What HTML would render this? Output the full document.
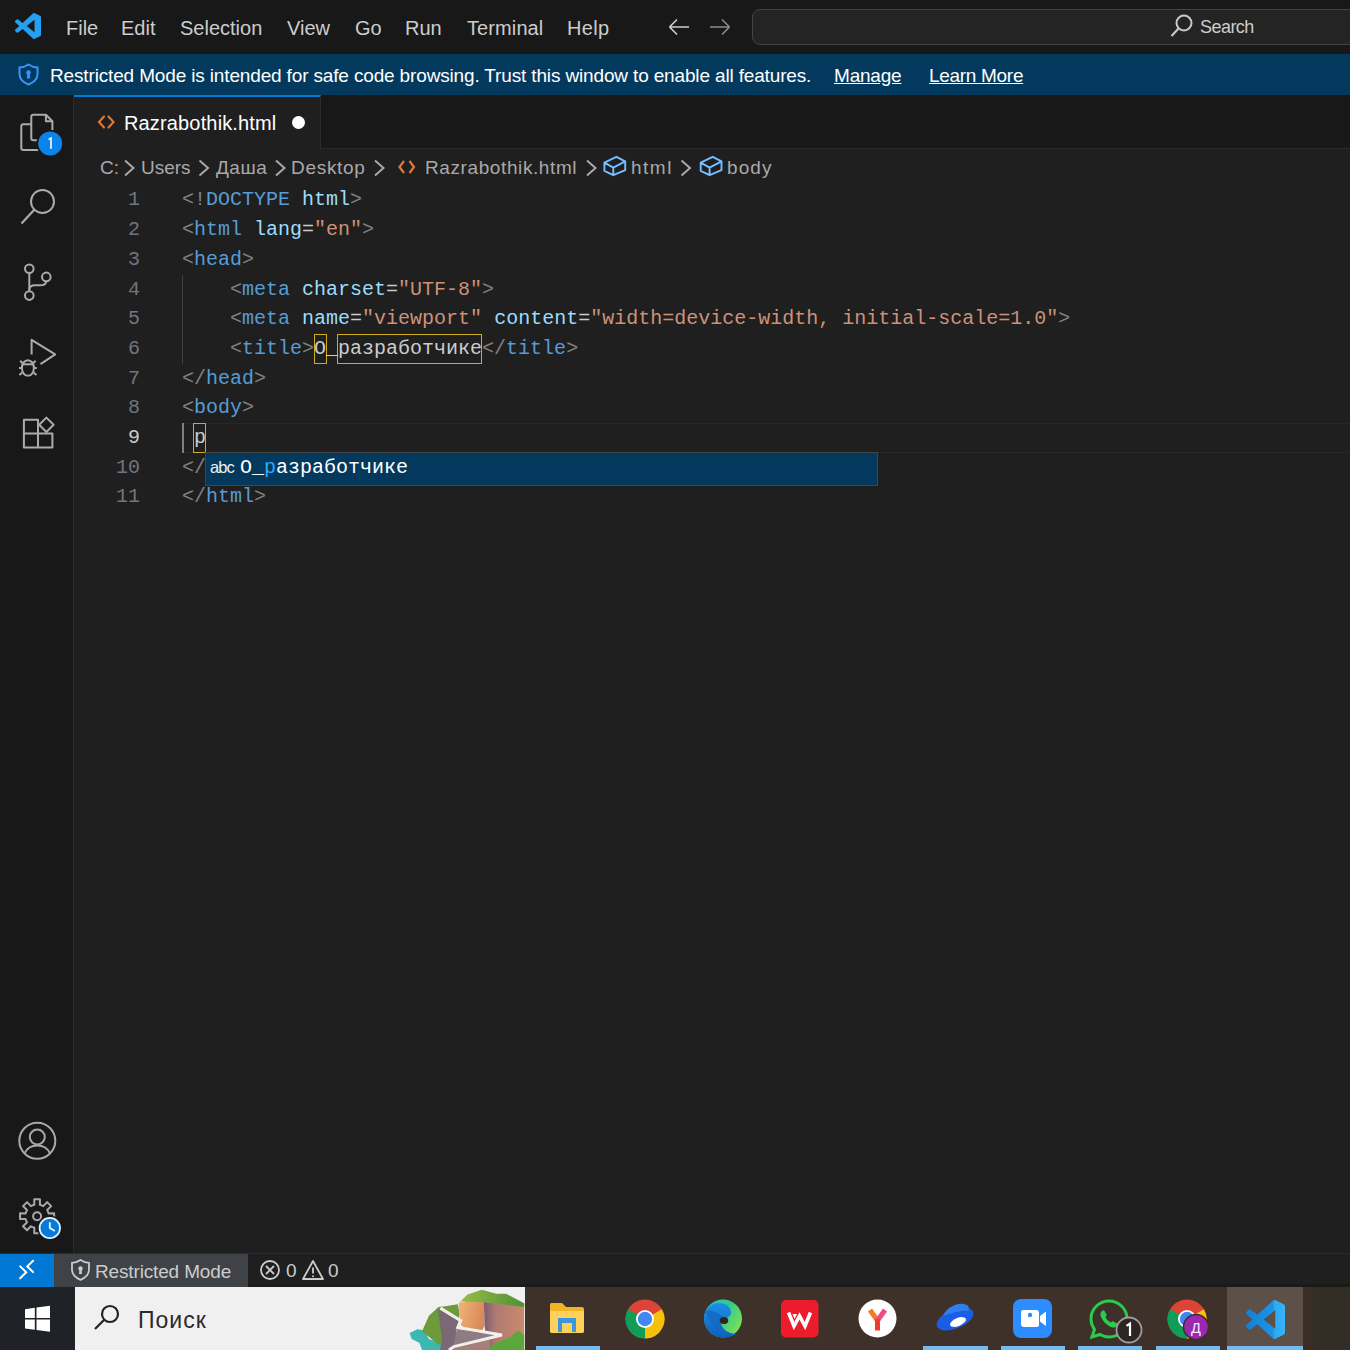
<!DOCTYPE html>
<html><head><meta charset="utf-8">
<style>
*{margin:0;padding:0;box-sizing:border-box}
html,body{width:1350px;height:1350px;overflow:hidden;background:#1f1f1f}
body{position:relative;font-family:"Liberation Sans",sans-serif}
.a{position:absolute}
.t{position:absolute;white-space:pre;line-height:1.117;font-family:"Liberation Sans",sans-serif}
.m{position:absolute;white-space:pre;line-height:1.1325;font-family:"Liberation Mono",monospace}
#title{left:0;top:0;width:1350px;height:54px;background:#181818}
#banner{left:0;top:54px;width:1350px;height:41px;background:#04395e}
#act{left:0;top:95px;width:74px;height:1159px;background:#181818;border-right:1px solid #2b2b2b}
#tabs{left:74px;top:95px;width:1276px;height:54px;background:#181818;border-bottom:1px solid #2b2b2b}
#tab{left:74px;top:95px;width:247px;height:54px;background:#1f1f1f;border-top:2px solid #0078d4;border-right:1px solid #2b2b2b}
#status{left:0;top:1253px;width:1350px;height:34px;background:#1f1f1f;border-top:1.5px solid #2b2b2b;border-bottom:3px solid #1a1a1a}
#taskbar{left:0;top:1287px;width:1350px;height:63px;background:#3d3129}
.menu{color:#cccccc;font-size:20px;top:17px}
.code{font-size:20px;color:#cccccc}
.ln{position:absolute;font-family:"Liberation Mono",monospace;font-size:20px;color:#6e7681;text-align:right;width:60px;left:80px;line-height:1.1325;white-space:pre}
.tg{color:#808080}.tn{color:#569cd6}.at{color:#9cdcfe}.st{color:#ce9178}
.bc{color:#a9a9a9;font-size:19px;top:157px}
.chev{position:absolute;top:162px}
</style></head>
<body>
<!-- title bar -->
<div id="title" class="a"></div>
<svg class="a" style="left:15px;top:13px" width="26" height="26" viewBox="0 0 100 100"><path fill="#23a0f0" d="M96.46 10.8L75.86.87a6.23 6.23 0 0 0-7.1 1.2L29.35 38.04 12.19 25.01a4.16 4.16 0 0 0-5.32.24L1.36 30.26a4.17 4.17 0 0 0 0 6.16L16.25 50 1.36 63.58a4.17 4.17 0 0 0 0 6.16l5.51 5.01a4.16 4.16 0 0 0 5.32.24l17.16-13.03 39.41 35.96a6.22 6.22 0 0 0 7.1 1.2l20.6-9.92a6.24 6.24 0 0 0 3.540-5.63V16.43a6.25 6.25 0 0 0-3.54-5.63zm-21.45 63.55L45.11 50l29.9-24.35z"/></svg>
<div class="t menu" style="left:66px">File</div>
<div class="t menu" style="left:121px">Edit</div>
<div class="t menu" style="left:180px">Selection</div>
<div class="t menu" style="left:287px">View</div>
<div class="t menu" style="left:355px">Go</div>
<div class="t menu" style="left:405px">Run</div>
<div class="t menu" style="left:467px;letter-spacing:0.1px">Terminal</div>
<div class="t menu" style="left:567px;letter-spacing:0.3px">Help</div>
<svg class="a" style="left:666px;top:16px" width="70" height="22" viewBox="0 0 70 22">
 <path d="M3.5 11H23M3.5 11L11 3.5M3.5 11L11 18.5" stroke="#cccccc" stroke-width="1.7" fill="none"/>
 <path d="M44 11H63.5M63.5 11L56 3.5M63.5 11L56 18.5" stroke="#8a8a8a" stroke-width="1.7" fill="none"/>
</svg>
<div class="a" style="left:752px;top:9px;width:640px;height:36px;border:1.8px solid #444444;border-radius:8px;background:#242424"></div>
<svg class="a" style="left:1169px;top:13px" width="26" height="26" viewBox="0 0 26 26"><circle cx="15" cy="10" r="7.5" stroke="#c8c8c8" stroke-width="2" fill="none"/><path d="M9.5 15.5L2.5 23" stroke="#c8c8c8" stroke-width="2.2"/></svg>
<div class="t" style="left:1200px;top:17px;font-size:18px;color:#cccccc;letter-spacing:-0.55px">Search</div>

<!-- banner -->
<div id="banner" class="a"></div>
<svg class="a" style="left:17px;top:63px" width="23" height="23" viewBox="0 0 23 23"><path d="M11.5 1.5C8.5 3.5 5 4.5 2.5 4.5V11C2.5 16 6.5 19.5 11.5 21.5C16.5 19.5 20.5 16 20.5 11V4.5C18 4.5 14.5 3.5 11.5 1.5Z" stroke="#3794ff" stroke-width="2" fill="none"/><circle cx="11.5" cy="9.5" r="2.3" fill="#3794ff"/><path d="M10.3 10.5h2.4l0.5 5h-3.4z" fill="#3794ff"/></svg>
<div class="t" style="left:50px;top:65px;font-size:19px;color:#ffffff;letter-spacing:-0.15px">Restricted Mode is intended for safe code browsing. Trust this window to enable all features.</div>
<div class="t" style="left:834px;top:65px;font-size:19px;color:#ffffff;text-decoration:underline;letter-spacing:-0.2px">Manage</div>
<div class="t" style="left:929px;top:65px;font-size:19px;color:#ffffff;text-decoration:underline;letter-spacing:-0.3px">Learn More</div>

<!-- activity bar -->
<div id="act" class="a"></div>
<!-- activity icons -->
<svg class="a" style="left:0;top:95px" width="74" height="380" viewBox="0 95 74 380" fill="none" stroke="#ababab" stroke-width="2" stroke-linejoin="round">
 <!-- explorer -->
 <path d="M40 140.2H33.3Q31.3 140.2 31.3 138.2V116.7Q31.3 114.7 33.3 114.7H45.9L52.4 121.2V133"/>
 <path d="M45.9 114.9V121.2H52.2"/>
 <path d="M31.3 124.3H23.3Q21.3 124.3 21.3 126.3V147.9Q21.3 149.9 23.3 149.9H40"/>
 <!-- search -->
 <circle cx="42.5" cy="201.5" r="11.5"/>
 <path d="M34.5 209.5L21.5 223.5" stroke-width="2.2"/>
 <!-- scm -->
 <circle cx="29.3" cy="268.7" r="4.3"/>
 <circle cx="29.3" cy="295.6" r="4.3"/>
 <circle cx="46.3" cy="276.9" r="4.3"/>
 <path d="M29.3 273V291.3"/>
 <path d="M46.3 281.2C46.3 284 44 285.3 40 285.3H35C31.5 285.3 29.3 287 29.3 290"/>
 <!-- run debug -->
 <path d="M31.6 354.5V339.8L55.2 354.4L40.5 364.2"/>
 <ellipse cx="27.9" cy="368" rx="6" ry="7.8"/>
 <path d="M22.5 364.3H33.3"/>
 <path d="M20.2 360.8L22.6 363.2M19 368H21.8M19.4 375L22.2 372.4M35.6 360.8L33.2 363.2M36.8 368H34M36.4 375L33.6 372.4"/>
 <!-- extensions -->
 <path d="M23.9 419.8H38V447.6H23.9Z M23.9 433.5H52.4V447.6H38"/>
 <path d="M46.4 417.6L53.6 424.8L46.4 432L39.2 424.8Z"/>
</svg>
<svg class="a" style="left:0;top:1110px" width="74" height="140" viewBox="0 1110 74 140" fill="none" stroke="#a9a9a9" stroke-width="2">
 <circle cx="37.3" cy="1140.8" r="18"/>
 <circle cx="37.3" cy="1137" r="7.5"/>
 <path d="M24.5 1153.5C27 1148 32 1145.5 37.3 1145.5C42.6 1145.5 47.6 1148 50.1 1153.5"/>
 <path stroke-linejoin="round" d="M41.04 1205.08 L39.85 1204.73 L39.96 1199.14 L34.24 1199.14 L34.35 1204.73 L33.16 1205.08 L32.02 1205.55 L30.93 1206.14 L27.05 1202.12 L23.02 1206.15 L27.04 1210.03 L26.45 1211.12 L25.98 1212.26 L25.63 1213.45 L20.04 1213.34 L20.04 1219.06 L25.63 1218.95 L25.98 1220.14 L26.45 1221.28 L27.04 1222.37 L23.02 1226.25 L27.05 1230.28 L30.93 1226.26 L32.02 1226.85 L33.16 1227.32 L34.35 1227.67 L34.24 1233.26 L39.96 1233.26 L39.85 1227.67 L41.04 1227.32 L42.18 1226.85 L43.27 1226.26 L47.15 1230.28 L51.18 1226.25 L47.16 1222.37 L47.75 1221.28 L48.22 1220.14 L48.57 1218.95 L54.16 1219.06 L54.16 1213.34 L48.57 1213.45 L48.22 1212.26 L47.75 1211.12 L47.16 1210.03 L51.18 1206.15 L47.15 1202.12 L43.27 1206.14 L42.18 1205.55Z"/>
 <circle cx="37.1" cy="1216.2" r="4"/>
 <circle cx="49.8" cy="1228" r="12.5" fill="#181818" stroke="none"/>
 <circle cx="49.8" cy="1228" r="10.2" fill="#0a78d8" stroke="#d8f4ff" stroke-width="1.8"/>
 <path d="M49.8 1222.2v5.8l5 3" stroke="#e8f8ff" stroke-width="1.8"/>
</svg>
<svg class="a" style="left:36px;top:130px" width="30" height="30" viewBox="0 0 30 30"><circle cx="14.2" cy="13.6" r="13.8" fill="#181818"/><circle cx="14.2" cy="13.6" r="12" fill="#0a84ea"/><path d="M12.6 9.6L15 8.3V18.8" stroke="#eef6ff" stroke-width="1.7" fill="none"/></svg>


<!-- tabs -->
<div id="tabs" class="a"></div>
<div id="tab" class="a"></div>
<svg class="a" style="left:90px;top:110px" width="30" height="24" viewBox="90 110 30 24" fill="none" stroke="#e37933" stroke-width="2.1" stroke-linecap="round"><path d="M104 116.5L99 122L104 127.5M108.5 116.5L113.5 122L108.5 127.5"/></svg>
<div class="t" style="left:124px;top:112px;font-size:20px;color:#ffffff;letter-spacing:0.15px">Razrabothik.html</div>
<div class="a" style="left:292px;top:116px;width:13px;height:13px;border-radius:50%;background:#ffffff"></div>
<!-- breadcrumbs -->
<div class="t bc" style="left:100px">C:</div>
<div class="t bc" style="left:141px">Users</div>
<div class="t bc" style="left:216px;letter-spacing:0.5px">Даша</div>
<div class="t bc" style="left:291px;letter-spacing:0.7px">Desktop</div>
<div class="t bc" style="left:425px;letter-spacing:0.6px">Razrabothik.html</div>
<div class="t bc" style="left:631px;letter-spacing:1.5px">html</div>
<div class="t bc" style="left:727px;letter-spacing:1.1px">body</div>
<svg class="a" style="left:0;top:150px" width="780" height="35" viewBox="0 150 780 35" fill="none">
 <g stroke="#a9a9a9" stroke-width="2"><path d="M125 160.5L133.5 168L125 175.5"/><path d="M199.5 160.5L208 168L199.5 175.5"/><path d="M276 160.5L284.5 168L276 175.5"/><path d="M375 160.5L383.5 168L375 175.5"/><path d="M587 160.5L595.5 168L587 175.5"/><path d="M681.5 160.5L690 168L681.5 175.5"/></g>
 <path d="M404 161L399.5 167L404 173M409.5 161L414 167L409.5 173" stroke="#e37933" stroke-width="2.2"/>
 <g stroke="#75beff" stroke-width="1.9" stroke-linejoin="round"><path d="M616.4 156.8L625.2 161.3V170.2L613.3 175.2L604.4 170.8V162.6Z M604.4 162.6L613.3 167.6L625.2 161.3 M613.3 167.6V175.2"/>
 <path transform="translate(96.3 0)" d="M616.4 156.8L625.2 161.3V170.2L613.3 175.2L604.4 170.8V162.6Z M604.4 162.6L613.3 167.6L625.2 161.3 M613.3 167.6V175.2"/></g>
</svg>



<!-- editor -->
<div class="a" style="left:182px;top:422.50px;width:1168px;height:30.20px;border-top:1.5px solid #282828;border-bottom:1.5px solid #282828"></div>
<div class="a" style="left:182px;top:274.50px;width:1px;height:89.10px;background:#404040"></div>
<div class="a" style="left:181.5px;top:423.00px;width:2px;height:29.70px;background:#808080"></div>
<div class="a" style="left:314px;top:333.90px;width:13px;height:29.70px;border:1.3px solid #cdae1a"></div>
<div class="a" style="left:337px;top:333.90px;width:145px;height:29.70px;border:1.3px solid #cdae1a"></div>
<div class="a" style="left:193px;top:423.00px;width:13px;height:29.70px;border:1.3px solid #cdae1a"></div>
<div class="ln" style="top:185.40px;height:29.7px;line-height:29.7px;color:#6e7681">1</div>
<div class="m code" style="left:182px;top:185.40px;height:29.7px;line-height:29.7px"><span class="tg">&lt;!</span><span class="tn">DOCTYPE</span> <span class="at">html</span><span class="tg">&gt;</span></div>
<div class="ln" style="top:215.10px;height:29.7px;line-height:29.7px;color:#6e7681">2</div>
<div class="m code" style="left:182px;top:215.10px;height:29.7px;line-height:29.7px"><span class="tg">&lt;</span><span class="tn">html</span> <span class="at">lang</span>=<span class="st">"en"</span><span class="tg">&gt;</span></div>
<div class="ln" style="top:244.80px;height:29.7px;line-height:29.7px;color:#6e7681">3</div>
<div class="m code" style="left:182px;top:244.80px;height:29.7px;line-height:29.7px"><span class="tg">&lt;</span><span class="tn">head</span><span class="tg">&gt;</span></div>
<div class="ln" style="top:274.50px;height:29.7px;line-height:29.7px;color:#6e7681">4</div>
<div class="m code" style="left:182px;top:274.50px;height:29.7px;line-height:29.7px">    <span class="tg">&lt;</span><span class="tn">meta</span> <span class="at">charset</span>=<span class="st">"UTF-8"</span><span class="tg">&gt;</span></div>
<div class="ln" style="top:304.20px;height:29.7px;line-height:29.7px;color:#6e7681">5</div>
<div class="m code" style="left:182px;top:304.20px;height:29.7px;line-height:29.7px">    <span class="tg">&lt;</span><span class="tn">meta</span> <span class="at">name</span>=<span class="st">"viewport"</span> <span class="at">content</span>=<span class="st">"width=device-width, initial-scale=1.0"</span><span class="tg">&gt;</span></div>
<div class="ln" style="top:333.90px;height:29.7px;line-height:29.7px;color:#6e7681">6</div>
<div class="m code" style="left:182px;top:333.90px;height:29.7px;line-height:29.7px">    <span class="tg">&lt;</span><span class="tn">title</span><span class="tg">&gt;</span>O_разработчике<span class="tg">&lt;/</span><span class="tn">title</span><span class="tg">&gt;</span></div>
<div class="ln" style="top:363.60px;height:29.7px;line-height:29.7px;color:#6e7681">7</div>
<div class="m code" style="left:182px;top:363.60px;height:29.7px;line-height:29.7px"><span class="tg">&lt;/</span><span class="tn">head</span><span class="tg">&gt;</span></div>
<div class="ln" style="top:393.30px;height:29.7px;line-height:29.7px;color:#6e7681">8</div>
<div class="m code" style="left:182px;top:393.30px;height:29.7px;line-height:29.7px"><span class="tg">&lt;</span><span class="tn">body</span><span class="tg">&gt;</span></div>
<div class="ln" style="top:423.00px;height:29.7px;line-height:29.7px;color:#cccccc">9</div>
<div class="m code" style="left:182px;top:423.00px;height:29.7px;line-height:29.7px"> p</div>
<div class="ln" style="top:452.70px;height:29.7px;line-height:29.7px;color:#6e7681">10</div>
<div class="m code" style="left:182px;top:452.70px;height:29.7px;line-height:29.7px"><span class="tg">&lt;/</span><span class="tn">body</span><span class="tg">&gt;</span></div>
<div class="ln" style="top:482.40px;height:29.7px;line-height:29.7px;color:#6e7681">11</div>
<div class="m code" style="left:182px;top:482.40px;height:29.7px;line-height:29.7px"><span class="tg">&lt;/</span><span class="tn">html</span><span class="tg">&gt;</span></div>
<div class="a" style="left:205px;top:452.20px;width:673px;height:34px;background:#04395e;border:1px solid #454545"></div>
<div class="t" style="left:210px;top:458.20px;font-size:16.5px;color:#f0f0f0;letter-spacing:-0.9px">abc</div>
<div class="m" style="left:240px;top:452.20px;font-size:20px;line-height:31px;color:#ffffff">O_<span style="color:#2aaaff">р</span>азработчике</div>
<!-- status bar -->
<div id="status" class="a"></div>
<div class="a" style="left:0;top:1254px;width:54px;height:33px;background:#0078d4"></div>
<svg class="a" style="left:0;top:1254px" width="54" height="33" viewBox="0 1254 54 33" fill="none" stroke="#ffffff" stroke-width="2" stroke-linecap="round"><path d="M20.2 1266.4L26.2 1272.2L20.2 1278.2M33.1 1260.8L27.3 1266.4L33.1 1272.1"/></svg>
<div class="a" style="left:54px;top:1254px;width:194px;height:33px;background:#3f4246"></div>
<svg class="a" style="left:69px;top:1258px" width="23" height="24" viewBox="0 0 23 24" fill="none"><path d="M11.5 2C8.8 3.8 5.5 4.8 3 4.8V11.5C3 16.5 6.5 19.8 11.5 21.8C16.5 19.8 20 16.5 20 11.5V4.8C17.5 4.8 14.2 3.8 11.5 2Z" stroke="#cccccc" stroke-width="1.8"/><circle cx="11.5" cy="10.5" r="2.2" fill="#cccccc"/><path d="M10.4 11.5h2.2l0.4 4.5h-3z" fill="#cccccc"/></svg>
<div class="t" style="left:95px;top:1260.7px;font-size:19px;color:#cccccc;letter-spacing:-0.15px">Restricted Mode</div>
<svg class="a" style="left:258px;top:1258px" width="90" height="24" viewBox="0 0 90 24" fill="none" stroke="#cccccc" stroke-width="1.8"><circle cx="12" cy="12" r="9"/><path d="M8 8L16 16M16 8L8 16"/><path d="M55 3L65 21H45Z" stroke-linejoin="round"/><path d="M55 9.5V15.5M55 17.5V19" /></svg>
<div class="t" style="left:286px;top:1260px;font-size:19px;color:#cccccc">0</div>
<div class="t" style="left:328px;top:1260px;font-size:19px;color:#cccccc">0</div>

<div id="taskbar" class="a"></div>
<div class="a" style="left:0;top:1287px;width:75px;height:63px;background:#1f2226"></div>
<svg class="a" style="left:24px;top:1305px" width="28" height="28" viewBox="0 0 28 28" fill="#ffffff"><path d="M1 4.2L10.8 2.8V13H1Z"/><path d="M12.5 2.6L26 0.8V13H12.5Z"/><path d="M1 14.6H10.8V24.8L1 23.4Z"/><path d="M12.5 14.6H26V26.8L12.5 25Z"/></svg>
<div class="a" style="left:75px;top:1287px;width:450px;height:63px;background:#f0f0f0"></div>
<svg class="a" style="left:90px;top:1302px" width="32" height="32" viewBox="0 0 32 32" fill="none" stroke="#222222" stroke-width="2.2"><circle cx="20" cy="12" r="8"/><path d="M14.2 17.8L5 27"/></svg>
<div class="t" style="left:138px;top:1307.5px;font-size:23px;color:#2a2a2a;letter-spacing:1px">Поиск</div>
<!-- illustration -->
<svg class="a" style="left:400px;top:1285px" width="125" height="65" viewBox="0 0 125 65">
 <defs>
  <linearGradient id="rk" x1="0" y1="0" x2="1" y2="0.3"><stop offset="0" stop-color="#f2b57a"/><stop offset="1" stop-color="#d88b5a"/></linearGradient>
  <linearGradient id="rk2" x1="0" y1="0" x2="1" y2="0"><stop offset="0" stop-color="#7d5a6e"/><stop offset="0.3" stop-color="#b07a72"/><stop offset="1" stop-color="#c98a6c"/></linearGradient>
  <linearGradient id="gr" x1="0" y1="0" x2="1" y2="0"><stop offset="0" stop-color="#9bbf45"/><stop offset="1" stop-color="#4f8f3a"/></linearGradient>
 </defs>
 <path d="M9.6 48.1L17.3 44.3L24.1 45.3L28.9 53.9L40.4 57.8L48.1 59.7L48.1 65L22.1 65L19.3 57.8L11.6 53.9Z" fill="#3cb8b0"/>
 <path d="M22.1 46.2L28.9 30.8L38.5 22.1L45.3 21.2L57.8 19.3L59.7 28.9L53.9 57.8L38.5 59.7Z" fill="#6d9a3a"/>
 <path d="M58.7 18.3L77 13.5L83.8 16.4L84.7 40.4L81.8 46.2L67.4 46.2L59.7 38.5Z" fill="url(#rk)"/>
 <path d="M83.8 16.4L124.2 19.3L124.2 65L86.7 65L84.7 40.4Z" fill="url(#rk2)"/>
 <path d="M57.8 19.3L67.4 9.6L81.8 4.8L96.3 8.7L105.9 8.7L124.2 18.3L124.2 22.1L83.8 17.3L61.6 16.4Z" fill="url(#gr)"/>
 <path d="M50 60L90 48L90 65L48 65Z" fill="#a58078"/>
 <path d="M38 24L59 35L56 45L60 60L48 65H40L42 55Z" fill="#7b6874"/>
 <path d="M57 44L102 50L62 62L52 65H50L54 58Z" fill="#8d7c82"/>
 <path d="M40.4 23.1L60.7 35.6L57.8 42.4L102 50L54 61.6L49 65" fill="none" stroke="#f3efea" stroke-width="3" stroke-linejoin="miter"/>
 <path d="M86.7 65L96.3 57.8L110.7 52L117.5 45.3L124.2 50.1L124.2 65Z" fill="#5aa83c"/>
</svg>
<!-- taskbar icons -->
<svg class="a" style="left:548px;top:1301px" width="38" height="34" viewBox="0 0 38 34">
 <path d="M2 4C2 2.5 3 2 4 2H14L18 6H34C35 6 36 7 36 8V30C36 31 35 32 34 32H4C3 32 2 31 2 30Z" fill="#f2b427"/>
 <path d="M2 10H36V30C36 31 35 32 34 32H4C3 32 2 31 2 30Z" fill="#ffd05a"/>
 <path d="M10 17H28V31H24V22H14V31H10Z" fill="#3a96dd"/>
</svg>
<div class="a" style="left:536px;top:1346px;width:64px;height:4px;background:#76b9ed"></div>
<svg class="a" style="left:625px;top:1299px" width="40" height="40" viewBox="0 0 40 40">
 <circle cx="20" cy="20" r="19.5" fill="#db4437"/>
 <path d="M20 20L36.9 10.25A19.5 19.5 0 0 1 20 39.5Z" fill="#f4c20d"/>
 <path d="M20 20L20 39.5A19.5 19.5 0 0 1 3.1 10.25Z" fill="#0f9d58"/>
 <circle cx="20" cy="20" r="9" fill="#ffffff"/>
 <circle cx="20" cy="20" r="7.2" fill="#4285f4"/>
</svg>
<svg class="a" style="left:703px;top:1299px" width="40" height="40" viewBox="0 0 40 40">
 <defs><linearGradient id="eg" x1="0" y1="0" x2="1" y2="0.6"><stop offset="0" stop-color="#2fb8e8"/><stop offset="0.55" stop-color="#34c98a"/><stop offset="1" stop-color="#78e05a"/></linearGradient>
 <linearGradient id="eb" x1="0" y1="0" x2="0" y2="1"><stop offset="0" stop-color="#1d8fe6"/><stop offset="1" stop-color="#0f5fb8"/></linearGradient></defs>
 <circle cx="20" cy="19.5" r="19" fill="url(#eg)"/>
 <path d="M1 19.5C1 10 8 4 16 4C23 4 28 8 28 13C28 17 25 19 21 19.5C19 19.8 18 21 18 23C18 29 24 35 33 35C29.5 37.5 25 38.5 20 38.5C9.5 38.5 1 30 1 19.5Z" fill="url(#eb)"/>
 <path d="M3 12C5 21 11 31 22 36C26 37.5 30 37 33 35C26 35 18 30 17 23C16.5 20 18 18.5 21 18.5C16 14 8 10 3 12Z" fill="#1468c6" opacity="0.8"/>
 <ellipse cx="21" cy="21.5" rx="4.2" ry="3.6" fill="#2e2420"/>
</svg>
<svg class="a" style="left:780px;top:1300px" width="39" height="38" viewBox="0 0 39 38">
 <rect x="1" y="0" width="37.5" height="37.5" rx="5" fill="#ec1c2c"/>
 <path d="M8.5 12.5L14 26L19.5 16L25 26L30.5 12.5" fill="none" stroke="#ffffff" stroke-width="3.6" stroke-linejoin="miter"/>
 <path d="M12.5 14H17L14.5 19Z" fill="#ffffff"/>
</svg>
<svg class="a" style="left:858px;top:1299px" width="39" height="39" viewBox="0 0 39 39">
 <circle cx="19.5" cy="19.5" r="19" fill="#ffffff"/>
 <path d="M19.5 21.5L12 11" stroke="#f47a26" stroke-width="5"/>
 <path d="M19.5 21.5L27 11" stroke="#ee4a8a" stroke-width="5"/>
 <path d="M19.5 20V31.5" stroke="#f03c2a" stroke-width="5"/>
</svg>
<svg class="a" style="left:934px;top:1302px" width="42" height="33" viewBox="0 0 42 33">
 <ellipse cx="21" cy="17" rx="19.5" ry="9.5" transform="rotate(-22 21 17)" fill="#1a5ee6"/>
 <path d="M9 14C12 6 22 1 30 2C35 3 36 6 34 9C28 8 18 11 9 14Z" fill="#2f7ef0"/>
 <ellipse cx="24" cy="20" rx="8.5" ry="4" transform="rotate(-22 24 20)" fill="#ffffff"/>
</svg>
<div class="a" style="left:923px;top:1346px;width:65px;height:4px;background:#76b9ed"></div>
<svg class="a" style="left:1013px;top:1299px" width="39" height="39" viewBox="0 0 39 39">
 <rect x="0" y="0" width="39" height="39" rx="8" fill="#2d8cff"/>
 <path d="M8 13C8 12 9 11 10 11H23C25 11 26 12 26 14V26C26 27 25 28 24 28H11C9 28 8 27 8 25Z" fill="#ffffff"/>
 <path d="M27 17L33 12.5V27L27 22.5Z" fill="#ffffff"/>
 <circle cx="17" cy="16" r="2.2" fill="#2d8cff"/>
</svg>
<div class="a" style="left:1001px;top:1346px;width:64px;height:4px;background:#76b9ed"></div>
<svg class="a" style="left:1089px;top:1299px" width="56" height="46" viewBox="0 0 56 46">
 <path d="M20 2C30 2 38 10 38 20C38 30 30 38 20 38C16.5 38 13.5 37 11 35.5L3 38L5.5 30.5C3.5 27.5 2 24 2 20C2 10 10 2 20 2Z" fill="none" stroke="#28cd4c" stroke-width="3"/>
 <path d="M13 12C14 11 15 11 15.5 12L17.5 15.5C18 16.5 17.5 17 16.5 18C17.5 20.5 19.5 22.5 22 23.5C23 22.5 23.5 22 24.5 22.5L28 24.5C29 25 29 26 28 27C26 29 23.5 29 20 27C16.5 25 14 22 12.5 19C11 16 11 14 13 12Z" fill="#28cd4c"/>
 <circle cx="40" cy="31" r="12.5" fill="#2b2623" stroke="#a39d98" stroke-width="1.8"/>
 <path d="M37.5 26.8L41 24.5V37" stroke="#ffffff" stroke-width="2.2" fill="none"/>
</svg>
<div class="a" style="left:1078px;top:1346px;width:64px;height:4px;background:#76b9ed"></div>
<svg class="a" style="left:1167px;top:1299px" width="44" height="44" viewBox="0 0 44 44">
 <circle cx="20" cy="20" r="19.5" fill="#db4437"/>
 <path d="M20 20L36.9 10.25A19.5 19.5 0 0 1 20 39.5Z" fill="#f4c20d"/>
 <path d="M20 20L20 39.5A19.5 19.5 0 0 1 3.1 10.25Z" fill="#0f9d58"/>
 <circle cx="20" cy="20" r="9" fill="#ffffff"/>
 <circle cx="20" cy="20" r="7.2" fill="#4285f4"/>
 <circle cx="29" cy="28" r="12.5" fill="#9c27b0" stroke="#3a2e28" stroke-width="1.5"/>
 <text x="29" y="33.5" font-family="Liberation Sans" font-size="14.5" fill="#f4e8ff" text-anchor="middle">Д</text>
</svg>
<div class="a" style="left:1156px;top:1346px;width:64px;height:4px;background:#76b9ed"></div>
<div class="a" style="left:1303px;top:1287px;width:47px;height:63px;background:linear-gradient(90deg,#3a2d24 0,#3a2d24 8px,#332e25 14px,#332e25 100%)"></div>
<div class="a" style="left:1227px;top:1287px;width:76px;height:63px;background:#5c5048"></div>
<svg class="a" style="left:1246px;top:1300px" width="39" height="39" viewBox="0 0 100 100"><defs><linearGradient id="vsg" x1="0" y1="0" x2="1" y2="0"><stop offset="0" stop-color="#1580d2"/><stop offset="0.7" stop-color="#1c95e6"/><stop offset="0.72" stop-color="#2aa9f4"/><stop offset="1" stop-color="#3ab4f8"/></linearGradient></defs><path fill="url(#vsg)" d="M96.46 10.8L75.86.87a6.23 6.23 0 0 0-7.1 1.2L29.35 38.04 12.19 25.01a4.16 4.16 0 0 0-5.32.24L1.36 30.26a4.17 4.17 0 0 0 0 6.16L16.25 50 1.36 63.58a4.17 4.17 0 0 0 0 6.16l5.510 5.01a4.16 4.16 0 0 0 5.32.24l17.16-13.03 39.41 35.96a6.22 6.22 0 0 0 7.1 1.2l20.6-9.92a6.24 6.24 0 0 0 3.54-5.63V16.43a6.25 6.25 0 0 0-3.54-5.63zm-21.45 63.55L45.11 50l29.9-24.35z"/></svg>
<div class="a" style="left:1227px;top:1346px;width:76px;height:4px;background:#76b9ed"></div>

</body></html>
